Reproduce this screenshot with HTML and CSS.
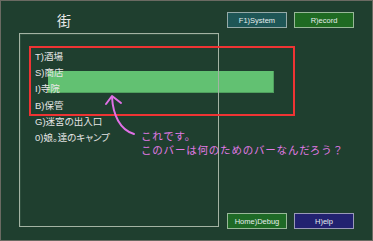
FILE: index.html
```html
<!DOCTYPE html>
<html lang="ja">
<head>
<meta charset="utf-8">
<link rel="stylesheet" href="styles.css">
</head>
<body>
<div class="screen">
  <div class="top">
    <div class="title">街</div>
    <div class="btns">
      <span class="btn btn-system">F1)System</span>
      <span class="btn btn-record">R)ecord</span>
    </div>
  </div>
  <div class="main">
    <div class="panel">
      <ul class="menu">
        <li>T)酒場</li>
        <li>S)商店</li>
        <li>I)寺院</li>
        <li>B)保管</li>
        <li>G)迷宮の出入口</li>
        <li>0)娘。達のキャンプ</li>
      </ul>
    </div>
    <div class="side">
      <div class="btns">
        <span class="btn btn-debug">Home)Debug</span>
        <span class="btn btn-help">H)elp</span>
      </div>
    </div>
  </div>
  <div class="bar"></div>
  <div class="highlight"></div>
  <svg class="arrow" width="373" height="241" viewBox="0 0 373 241">
    <path d="M112 97 C113 115 120 130 134 134" fill="none" stroke="#e070e6" stroke-width="2" stroke-linecap="round"/>
    <path d="M106 104 L112 96 L121 103" fill="none" stroke="#e070e6" stroke-width="2" stroke-linecap="round" stroke-linejoin="round"/>
  </svg>
  <div class="note">
    <div class="note-line">これです。</div>
    <div class="note-line">このバーは何のためのバーなんだろう？</div>
  </div>
</div>
</body>
</html>
```
FILE: styles.css
```css
html, body {
  margin: 0;
  padding: 0;
  background: #1f3f2f;
}
.screen {
  position: relative;
  width: 373px;
  height: 241px;
  box-sizing: border-box;
  padding: 12px 19px 0 19px;
  background: #1f3f2f;
  box-shadow: inset 0 0 0 1px #6a6a62;
  font-family: "Liberation Sans", "Noto Sans CJK JP", sans-serif;
  color: #e4e4e4;
  overflow: hidden;
}
.top {
  display: flex;
  align-items: center;
  height: 16px;
  margin-bottom: 5px;
}
.title {
  margin-left: 38px;
  font-family: "Noto Sans CJK JP", sans-serif;
  font-size: 14px;
  line-height: 16px;
  color: #e8e8e8;
}
.btns {
  display: flex;
  gap: 7px;
  margin-left: auto;
}
.btn {
  display: flex;
  align-items: center;
  justify-content: center;
  width: 60px;
  height: 16px;
  box-sizing: border-box;
  font-size: 7.5px;
  color: #e6eeee;
  border: 1px solid #95aaa8;
}
.btn-system { background: #1e5656; }
.btn-record { background: #1f6a22; border-color: #98b898; }
.btn-debug { background: #1e6a26; border-color: #98b898; }
.btn-help { background: #222270; border-color: #9a9ab8; }
.main {
  display: flex;
  height: 196px;
}
.panel {
  position: relative;
  z-index: 1;
  width: 200px;
  height: 194px;
  box-sizing: border-box;
  border: 1px solid #a3b3a3;
  box-shadow: inset 1px 1px 0 #2e4e3d;
}
.menu {
  list-style: none;
  margin: 0;
  padding: 15px 0 0 15px;
  font-size: 9.5px;
  line-height: 16.2px;
  color: #e6e6e6;
  font-feature-settings: "palt" 1;
}
.side {
  flex: 1;
  display: flex;
  align-items: flex-end;
}
.bar {
  position: absolute;
  left: 48px;
  top: 71px;
  width: 226px;
  height: 22px;
  box-sizing: border-box;
  background: #62c172;
  border-bottom: 1px solid #4fa05e;
  border-right: 1px solid #4fa05e;
  z-index: 0;
}
.highlight {
  position: absolute;
  left: 29px;
  top: 46px;
  width: 266px;
  height: 70px;
  box-sizing: border-box;
  border: 2px solid #ef3434;
  z-index: 2;
}
.arrow {
  position: absolute;
  left: 0;
  top: 0;
  z-index: 3;
}
.note {
  position: absolute;
  left: 141px;
  top: 129px;
  font-family: "Noto Sans CJK JP", sans-serif;
  font-size: 10.5px;
  letter-spacing: 0.8px;
  color: #e27ae6;
  white-space: nowrap;
  z-index: 3;
}
.note-line {
  height: 13.5px;
  line-height: 13.5px;
}
```
